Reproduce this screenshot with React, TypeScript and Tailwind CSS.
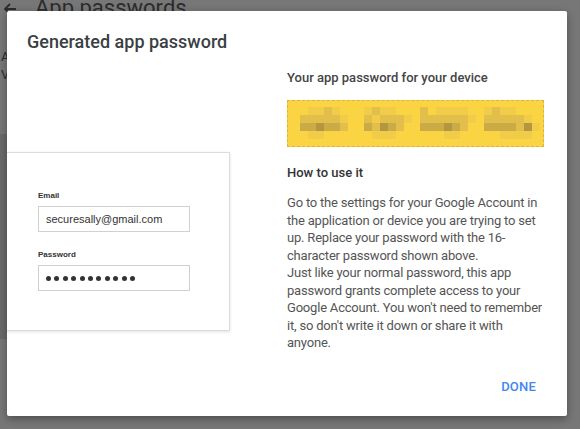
import React from "react";

const L = "#f1cc48";
const M = "#e2bf4a";
const D = "#cbab45";
const X = "#b29740";

type Cell = string | 0;
const groups: { x: number; rows: Cell[][] }[] = [
  {
    x: 12,
    rows: [
      [0, L, L, M, L, 0],
      [M, M, M, M, M, L],
      [D, D, X, D, D, M],
      [0, L, L, 0, 0, 0],
    ],
  },
  {
    x: 76,
    rows: [
      [L, M, L, L, 0, 0],
      [M, L, M, M, M, L],
      [D, M, X, D, M, 0],
      [0, L, L, L, 0, 0],
    ],
  },
  {
    x: 132,
    rows: [
      [M, 0, L, L, L, L, 0],
      [M, M, M, M, M, M, L],
      [D, D, D, X, D, M, 0],
      [0, 0, 0, L, L, 0, 0],
    ],
  },
  {
    x: 196,
    rows: [
      [L, M, L, L, 0, 0, 0],
      [M, M, M, M, M, L, 0],
      [D, D, D, D, M, X, L],
      [0, 0, L, L, L, L, 0],
    ],
  },
];

function Pixelated() {
  return (
    <svg width="255" height="45" viewBox="0 0 255 45" className="block">
      {groups.map((g, gi) =>
        g.rows.map((row, ri) =>
          row.map((c, ci) =>
            c ? (
              <rect
                key={`${gi}-${ri}-${ci}`}
                x={g.x + ci * 8}
                y={6 + ri * 8}
                width={8}
                height={8}
                fill={c}
              />
            ) : null
          )
        )
      )}
    </svg>
  );
}

export default function App() {
  return (
    <div
      className="relative w-[580px] h-[429px] overflow-hidden bg-[#777777]"
      style={{ fontFamily: "Roboto, 'Liberation Sans', sans-serif" }}
    >
      {/* background page (dimmed) */}
      <div className="flex items-center -mt-[6px] h-[28px]">
        <svg width="16" height="16" viewBox="0 0 16 16" className="ml-[2px] mt-[2px]">
          <path d="M14 8H3M8 3L3 8l5 5" stroke="#2c2c2c" strokeWidth="1.8" fill="none" />
        </svg>
        <span className="ml-[17px] text-[22px] leading-[28px] text-[#2c2c2c]">App passwords</span>
      </div>
      <div className="mt-[26px] pl-[1px] w-[7px] overflow-hidden whitespace-nowrap text-[13px] leading-[18px] text-[#2c2c2c]">
        <div>App passwords let you sign in</div>
        <div>Verification. You'll only need</div>
      </div>
      <div className="mt-[50px] h-[205px] w-[40px] bg-[#6a6a6a]" />

      {/* dialog */}
      <div className="absolute left-[7px] top-[11px] w-[560px] h-[405px] bg-white rounded-[2px] shadow-[0_3px_8px_rgba(0,0,0,0.35)] flex flex-col pt-[19px] overflow-hidden">
        <h2 className="pl-[20px] text-[18px] leading-[24px] font-medium text-[#3a3f44]">
          Generated app password
        </h2>
        <div className="flex mt-[14px]">
          <div className="w-[280px] pt-[84px]">
            <div
              className="w-[223px] h-[179px] bg-white border-y border-r border-[#dcdcdc] shadow-[0_1px_3px_rgba(0,0,0,0.12)] pl-[31px] pt-[38px]"
              style={{ fontFamily: "'Liberation Sans', Arial, sans-serif" }}
            >
              <div className="text-[8px] leading-[10px] font-bold text-[#333]">Email</div>
              <div className="mt-[5px] h-[26px] w-[152px] border border-[#d0d0d0] pl-[7px] flex items-center text-[11px] text-[#333]">
                securesally@gmail.com
              </div>
              <div className="mt-[18px] text-[8px] leading-[10px] font-bold text-[#333]">Password</div>
              <div className="mt-[5px] h-[26px] w-[152px] border border-[#d0d0d0] pl-[7px] flex items-center gap-[3.4px]">
                {Array.from({ length: 11 }).map((_, i) => (
                  <span key={i} className="block w-[5px] h-[5px] rounded-full bg-[#333]" />
                ))}
              </div>
            </div>
          </div>
          <div className="w-[260px]">
            <div className="text-[13px] leading-[20px] font-medium text-[#444]">
              Your app password for your device
            </div>
            <div className="mt-[12px] h-[47px] w-[257px] bg-[#fbd443] border border-dashed border-[#dbb53a]">
              <Pixelated />
            </div>
            <div className="mt-[16px] text-[13px] leading-[20px] font-medium text-[#333]">How to use it</div>
            <div className="mt-[11px] text-[13px] leading-[17.5px] tracking-[-0.2px] text-[#555]">
              <p>
                Go to the settings for your Google Account in the application or device you are trying to set
                up. Replace your password with the 16-character password shown above.
              </p>
              <p>
                Just like your normal password, this app password grants complete access to your Google
                Account. You won't need to remember it, so don't write it down or share it with anyone.
              </p>
            </div>
          </div>
        </div>
        <div className="mt-auto flex justify-end pr-[31px] pb-[19px]">
          <span className="text-[13px] leading-[20px] font-medium text-[#4285f4] tracking-[0.2px]">DONE</span>
        </div>
      </div>
    </div>
  );
}
